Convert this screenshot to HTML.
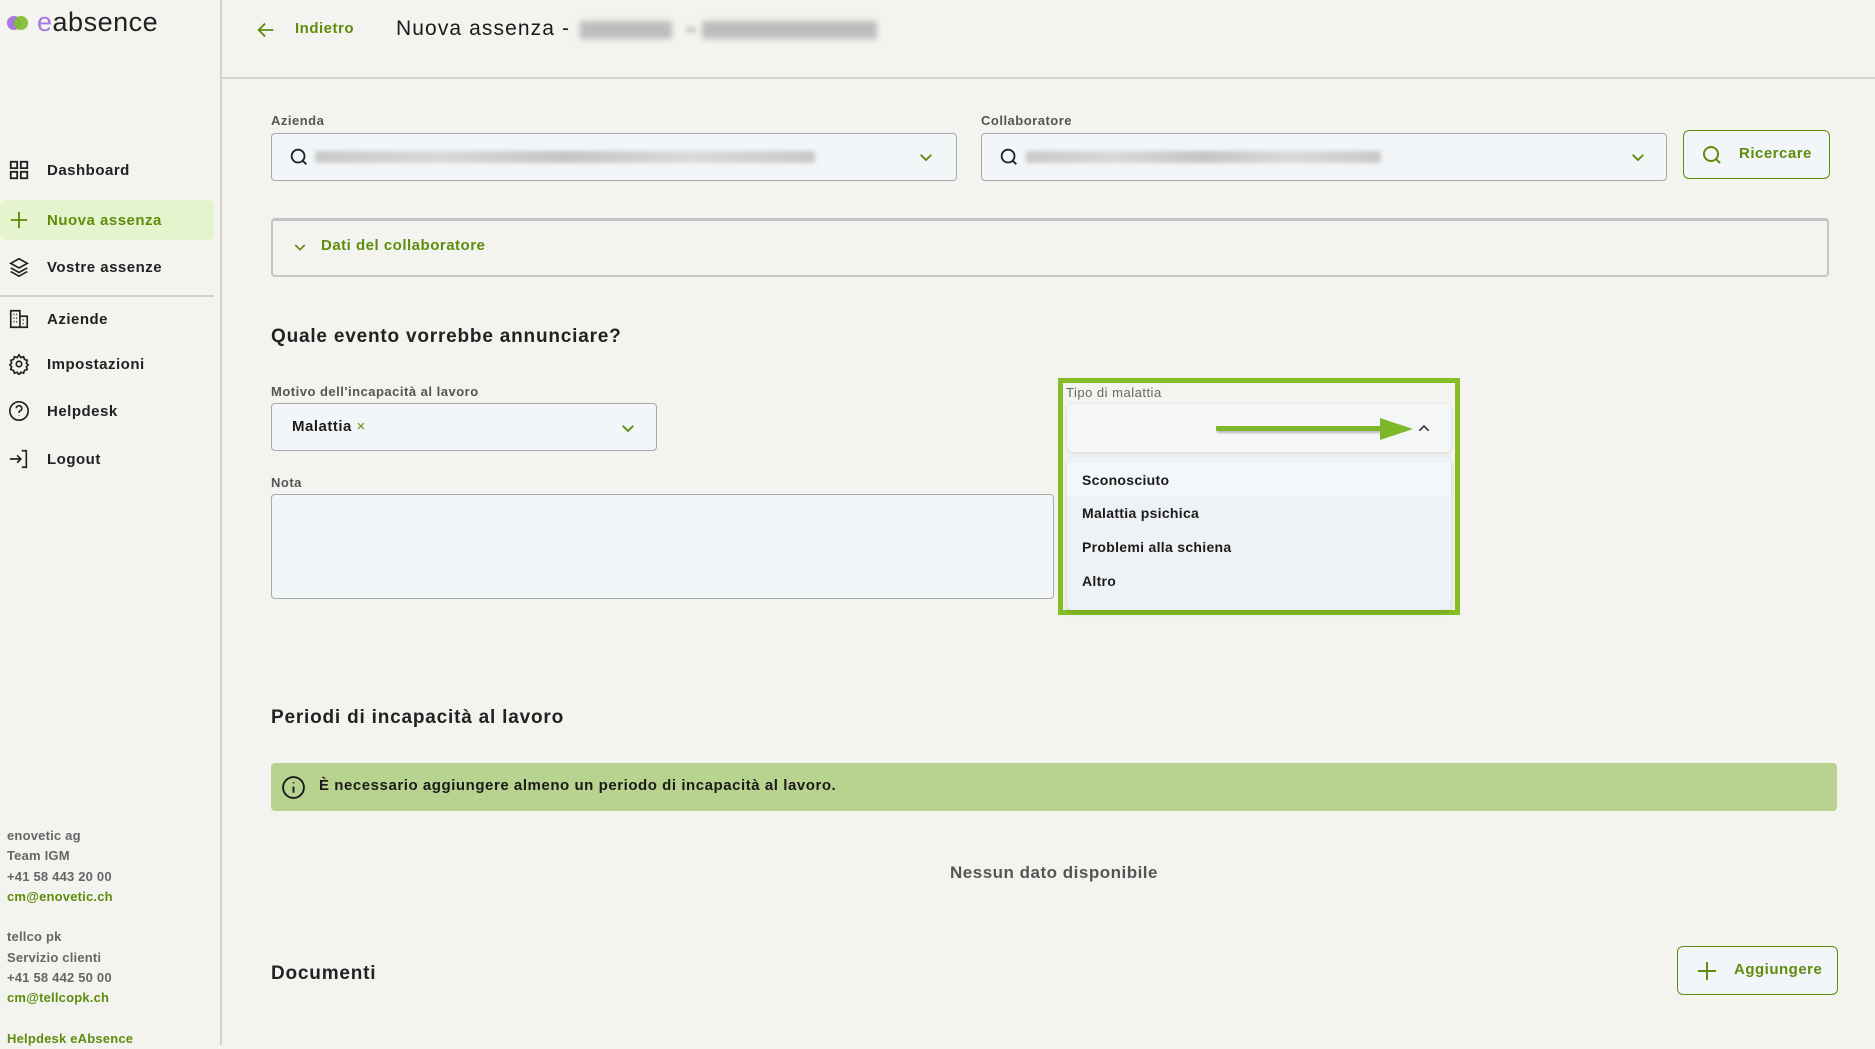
<!DOCTYPE html>
<html><head><meta charset="utf-8">
<style>
*{box-sizing:border-box;margin:0;padding:0}
body{width:1875px;height:1045px;overflow:hidden;background:#f3f3ef;font-family:"Liberation Sans",sans-serif;color:#1d1d1d;position:relative;letter-spacing:0.5px}
.a{position:absolute}
.side{left:0;top:0;width:222px;height:1045px;border-right:2px solid #d2d2d0}
.nav{left:0;width:214px;height:40px;display:flex;align-items:center;font-size:15px;font-weight:bold;color:#222}
.nav svg{position:absolute;left:8px;width:22px;height:22px}
.nav span{position:absolute;left:47px}
.ft{left:7px;font-size:13px;color:#666;font-weight:bold;letter-spacing:0.2px}
.gr{color:#5e8c0c}
.lbl{font-size:13px;color:#555;font-weight:bold}
.inp{background:#f3f6f8;border:1px solid #a9a9a9;border-radius:4px}
.blur{background:linear-gradient(90deg,#c9c9c9,#d8d8d8,#c4c4c4,#dadada,#c8c8c8);filter:blur(2px);height:12px;border-radius:2px}
.h2{font-size:19px;font-weight:bold;color:#222;letter-spacing:0.8px}
.item{left:1082px;font-size:14px;font-weight:bold;color:#1a1a1a;letter-spacing:0.3px}
.btn{border:1.5px solid #5e8c0c;border-radius:6px;background:#f3f6f8;color:#5e8c0c;font-weight:bold;font-size:15px}
</style></head><body>
<div class="a side"></div>
<div class="a" style="left:7px;top:16px;width:14px;height:14px;border-radius:50%;background:#a877e0"></div>
<div class="a" style="left:14px;top:16px;width:14px;height:14px;border-radius:50%;background:#7cbe2a;opacity:.9"></div>
<div class="a" style="left:37px;top:7px;font-size:27px;color:#222;letter-spacing:0.5px"><span style="color:#a877e0">e</span>absence</div>

<div class="a nav" style="top:150px"><svg viewBox="0 0 24 24" fill="none" stroke="#222" stroke-width="2"><rect x="3" y="3" width="7" height="7"/><rect x="14" y="3" width="7" height="7"/><rect x="3" y="14" width="7" height="7"/><rect x="14" y="14" width="7" height="7"/></svg><span>Dashboard</span></div>
<div class="a nav" style="top:200px;background:#e6f4cd;border-radius:6px;color:#5e8c0c"><svg viewBox="0 0 24 24" fill="none" stroke="#5e8c0c" stroke-width="2"><path d="M12 3v18M3 12h18"/></svg><span>Nuova assenza</span></div>
<div class="a nav" style="top:247px"><svg viewBox="0 0 24 24" fill="none" stroke="#222" stroke-width="1.8"><path d="M12 3l9 5-9 5-9-5z"/><path d="M3 13l9 5 9-5"/><path d="M3 17l9 5 9-5"/></svg><span>Vostre assenze</span></div>
<div class="a" style="left:0;top:295px;width:214px;height:2px;background:#d2d2d0"></div>
<div class="a nav" style="top:299px"><svg viewBox="0 0 24 24" fill="none" stroke="#222" stroke-width="1.8"><path d="M3 21V3h10v18M13 9h8v12M2 21h20M6 7h1M9 7h1M6 11h1M9 11h1M6 15h1M9 15h1M16 13h1M16 17h1"/></svg><span>Aziende</span></div>
<div class="a nav" style="top:344px"><svg viewBox="0 0 24 24" fill="none" stroke="#222" stroke-width="1.8"><circle cx="12" cy="12" r="3"/><path d="M12 2l2 3 3-1 1 3 3 1-1 3 2 2-2 2 1 3-3 1-1 3-3-1-2 3-2-3-3 1-1-3-3-1 1-3-2-2 2-2-1-3 3-1 1-3 3 1z"/></svg><span>Impostazioni</span></div>
<div class="a nav" style="top:391px"><svg viewBox="0 0 24 24" fill="none" stroke="#222" stroke-width="1.8"><circle cx="12" cy="12" r="10"/><path d="M9 9a3 3 0 1 1 4 3c-1 .5-1 1-1 2M12 17v.5"/></svg><span>Helpdesk</span></div>
<div class="a nav" style="top:439px"><svg viewBox="0 0 24 24" fill="none" stroke="#222" stroke-width="1.8"><path d="M2 12h12M10 8l4 4-4 4M15 3h5v18h-5"/></svg><span>Logout</span></div>

<div class="a ft" style="top:826px;line-height:20.3px">enovetic ag<br>Team IGM<br>+41 58 443 20 00<br><span class="gr">cm@enovetic.ch</span><br><br>tellco pk<br>Servizio clienti<br>+41 58 442 50 00<br><span class="gr">cm@tellcopk.ch</span><br><br><span class="gr">Helpdesk eAbsence</span></div>

<div class="a" style="left:222px;top:77px;width:1653px;height:2px;background:#d2d2d0"></div>
<svg class="a" style="left:255px;top:19px" width="22" height="22" viewBox="0 0 24 24" fill="none" stroke="#5e8c0c" stroke-width="2"><path d="M20 12H4M11 5l-7 7 7 7"/></svg>
<div class="a gr" style="left:295px;top:20px;font-size:15px;font-weight:bold">Indietro</div>
<div class="a" style="left:396px;top:17px;font-size:21px;color:#1a1a1a;letter-spacing:1.1px">Nuova assenza -</div>
<div class="a" style="left:580px;top:21px;width:92px;height:18px;background:#bdbdbd;filter:blur(3px)"></div>
<div class="a" style="left:686px;top:27px;width:10px;height:6px;background:#ccc;filter:blur(2px)"></div>
<div class="a" style="left:702px;top:21px;width:175px;height:18px;background:#bdbdbd;filter:blur(3px)"></div>

<div class="a lbl" style="left:271px;top:113px">Azienda</div>
<div class="a inp" style="left:271px;top:133px;width:686px;height:48px"></div>
<svg class="a" style="left:288px;top:146px" width="22" height="22" viewBox="0 0 24 24" fill="none" stroke="#222" stroke-width="2"><circle cx="11" cy="11" r="7"/><path d="M16 16l4 4"/></svg>
<div class="a blur" style="left:315px;top:151px;width:500px"></div>
<svg class="a" style="left:917px;top:148px" width="18" height="18" viewBox="0 0 24 24" fill="none" stroke="#5e8c0c" stroke-width="2.5"><path d="M5 9l7 7 7-7"/></svg>

<div class="a lbl" style="left:981px;top:113px">Collaboratore</div>
<div class="a inp" style="left:981px;top:133px;width:686px;height:48px"></div>
<svg class="a" style="left:998px;top:146px" width="22" height="22" viewBox="0 0 24 24" fill="none" stroke="#222" stroke-width="2"><circle cx="11" cy="11" r="7"/><path d="M16 16l4 4"/></svg>
<div class="a blur" style="left:1026px;top:151px;width:355px"></div>
<svg class="a" style="left:1629px;top:148px" width="18" height="18" viewBox="0 0 24 24" fill="none" stroke="#5e8c0c" stroke-width="2.5"><path d="M5 9l7 7 7-7"/></svg>

<div class="a btn" style="left:1683px;top:130px;width:147px;height:49px"></div>
<svg class="a" style="left:1700px;top:143px" width="24" height="24" viewBox="0 0 24 24" fill="none" stroke="#5e8c0c" stroke-width="2"><circle cx="11" cy="11" r="7"/><path d="M16 16l4 4"/></svg>
<div class="a gr" style="left:1739px;top:145px;font-size:15px;font-weight:bold">Ricercare</div>

<div class="a" style="left:271px;top:218px;width:1558px;height:59px;border:2px solid #c4c4c4;border-top-width:3px;border-radius:4px"></div>
<svg class="a" style="left:292px;top:239px" width="16" height="16" viewBox="0 0 24 24" fill="none" stroke="#5e8c0c" stroke-width="2.5"><path d="M5 9l7 7 7-7"/></svg>
<div class="a gr" style="left:321px;top:237px;font-size:15px;font-weight:bold">Dati del collaboratore</div>

<div class="a h2" style="left:271px;top:326px">Quale evento vorrebbe annunciare?</div>

<div class="a lbl" style="left:271px;top:384px">Motivo dell'incapacità al lavoro</div>
<div class="a inp" style="left:271px;top:403px;width:386px;height:48px"></div>
<div class="a" style="left:292px;top:418px;font-size:15px;font-weight:bold">Malattia <span class="gr" style="font-weight:normal">×</span></div>
<svg class="a" style="left:619px;top:419px" width="18" height="18" viewBox="0 0 24 24" fill="none" stroke="#5e8c0c" stroke-width="2.5"><path d="M5 9l7 7 7-7"/></svg>

<div class="a lbl" style="left:271px;top:475px">Nota</div>
<div class="a inp" style="left:271px;top:494px;width:783px;height:105px"></div>

<div class="a" style="left:1058px;top:378px;width:402px;height:237px;border:5px solid #86bd24"></div>
<div class="a lbl" style="left:1066px;top:385px;color:#666;font-weight:normal">Tipo di malattia</div>
<div class="a" style="left:1067px;top:404px;width:384px;height:48px;background:#f4f6f8;border-radius:6px;box-shadow:0 1px 4px rgba(0,0,0,.12)"></div>
<div class="a" style="left:1216px;top:426px;width:170px;height:5px;background:#7cb82a;box-shadow:1px 2px 2px rgba(0,0,0,.25)"></div>
<svg class="a" style="left:1380px;top:416px" width="34" height="26" viewBox="0 0 34 26"><path d="M0 2L33 13L0 24z" fill="#7cb82a"/></svg>
<svg class="a" style="left:1416px;top:420px" width="16" height="16" viewBox="0 0 24 24" fill="none" stroke="#333" stroke-width="2.5"><path d="M5 16l7-7 7 7"/></svg>
<div class="a" style="left:1067px;top:457px;width:384px;height:153px;background:#eff2f5;border-radius:6px;box-shadow:0 2px 6px rgba(0,0,0,.15)"></div>
<div class="a" style="left:1067px;top:463px;width:384px;height:34px;background:#f4f7f9"></div>
<div class="a item" style="top:472px">Sconosciuto</div>
<div class="a item" style="top:505px">Malattia psichica</div>
<div class="a item" style="top:539px">Problemi alla schiena</div>
<div class="a item" style="top:573px">Altro</div>

<div class="a h2" style="left:271px;top:707px">Periodi di incapacità al lavoro</div>
<div class="a" style="left:271px;top:763px;width:1566px;height:48px;background:#b8d290;border-radius:4px"></div>
<svg class="a" style="left:281px;top:775px" width="25" height="25" viewBox="0 0 24 24" fill="none" stroke="#1a1a1a" stroke-width="1.8"><circle cx="12" cy="12" r="10"/><path d="M12 11v6M12 7v1"/></svg>
<div class="a" style="left:319px;top:777px;font-size:15px;font-weight:bold;color:#1a1a1a;letter-spacing:0.55px">È necessario aggiungere almeno un periodo di incapacità al lavoro.</div>

<div class="a" style="left:854px;top:863px;width:400px;text-align:center;font-size:17px;color:#555;font-weight:bold">Nessun dato disponibile</div>

<div class="a h2" style="left:271px;top:963px">Documenti</div>
<div class="a btn" style="left:1677px;top:946px;width:161px;height:49px"></div>
<svg class="a" style="left:1695px;top:959px" width="24" height="24" viewBox="0 0 24 24" fill="none" stroke="#5e8c0c" stroke-width="2"><path d="M12 3v18M3 12h18"/></svg>
<div class="a gr" style="left:1734px;top:961px;font-size:15px;font-weight:bold">Aggiungere</div>
</body></html>
